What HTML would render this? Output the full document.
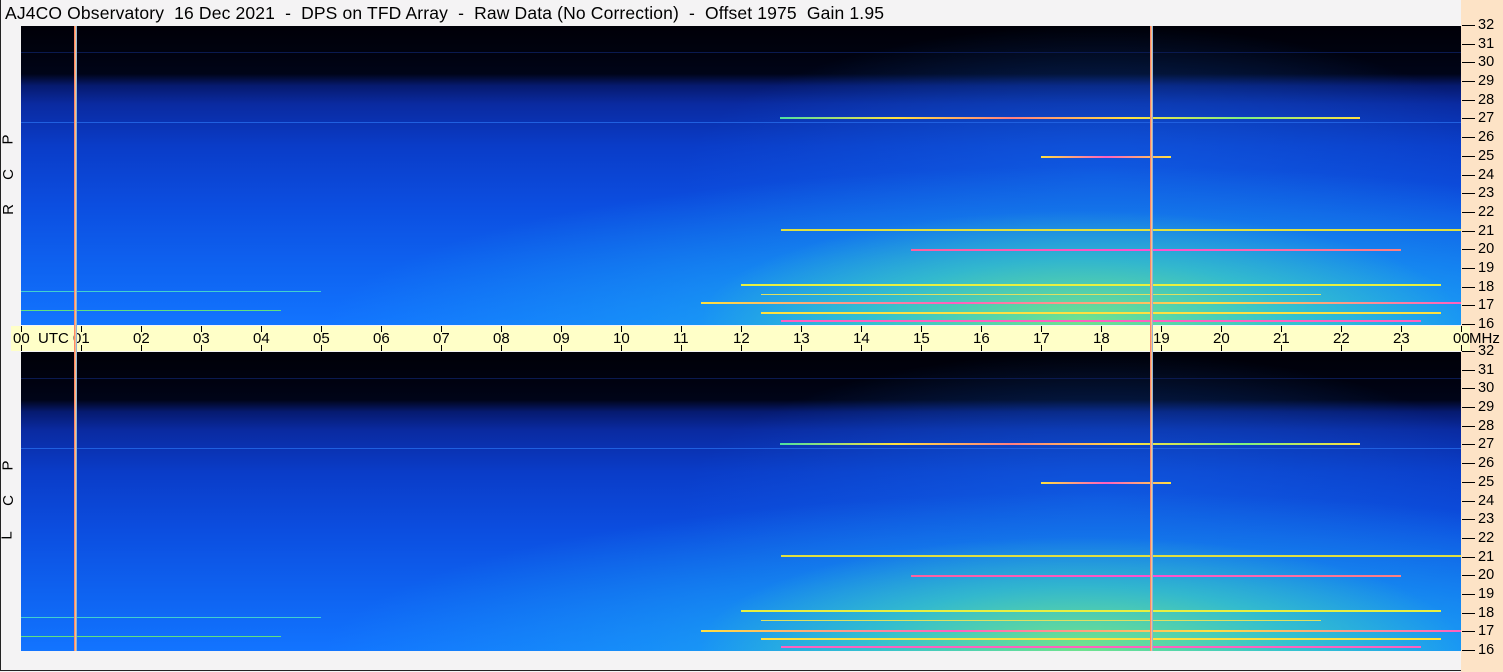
<!DOCTYPE html>
<html><head><style>
body{margin:0;width:1503px;height:672px;background:#f4f3f4;position:relative;overflow:hidden;font-family:"Liberation Sans",sans-serif;}
.frame{position:absolute;left:0;top:0;width:1501px;height:670px;border:1px solid #222;border-top:none;border-right:none;}
.title{position:absolute;left:5px;top:3px;font-size:17.5px;color:#000;white-space:pre;letter-spacing:0.15px;}
.spec{position:absolute;left:21px;width:1440px;height:299px;overflow:hidden;
background:
radial-gradient(ellipse 380px 110px at 1060px 295px, rgba(140,240,110,.75), rgba(80,225,170,.45) 55%, rgba(40,200,230,0) 100%),
radial-gradient(ellipse 780px 170px at 1080px 310px, rgba(40,210,220,.8), rgba(30,180,240,.4) 60%, rgba(20,150,250,0) 100%),
radial-gradient(ellipse 420px 150px at 1080px 150px, rgba(20,110,240,.5), rgba(20,110,240,0) 100%),
linear-gradient(to bottom,#000008 0%,#00020f 9%,#000418 16%,#061a70 20%,#0a2aa0 26%,#0a3cc8 40%,#0c4ee0 60%,#0e62f0 80%,#1274ff 100%);}
.l{position:absolute;height:2px;}
.vl{position:absolute;top:26px;height:625px;width:3px;background:linear-gradient(to right,#ff6060,#ffd080,#60a0ff);}
.ax{position:absolute;left:11px;top:326px;width:1459px;height:25px;background:#ffffc8;}
.tk{position:absolute;top:0;width:1px;height:25px;}
.tk:before,.tk:after{content:"";position:absolute;left:0;width:1px;height:6px;background:#000;}
.tk:before{top:0}.tk:after{bottom:0}
.hl{position:absolute;top:4px;font-size:15px;}
.rp{position:absolute;left:1461px;top:0;width:42px;height:672px;background:#fde3c6;}
.f{position:absolute;left:1462px;font-size:14.5px;width:41px;white-space:nowrap;}
.f:before{content:"";display:inline-block;width:13px;height:1px;background:#000;vertical-align:middle;margin-right:3px;}
.side{position:absolute;left:3px;font-size:15px;transform:rotate(-90deg);}
</style></head><body>
<div class="frame"></div>
<div class="rp"></div>
<div class="title">AJ4CO Observatory  16 Dec 2021  -  DPS on TFD Array  -  Raw Data (No Correction)  -  Offset 1975  Gain 1.95</div>

<div class="spec" style="top:26px">
<div class="l" style="top:26px;left:0;width:1440px;height:1px;background:#0a1a50"></div>
<div class="l" style="top:96px;left:0;width:1440px;height:1px;background:#2060e0"></div>
<div class="l" style="top:91px;left:759px;width:580px;background:linear-gradient(90deg,#50e0a0,#ffe040,#ff8080,#ffe040,#80f080,#ffe040)"></div>
<div class="l" style="top:130px;left:1020px;width:130px;background:linear-gradient(90deg,#ffe040,#ff60c0,#ffe040)"></div>
<div class="l" style="top:203px;left:760px;width:680px;background:#e0e040"></div>
<div class="l" style="top:223px;left:890px;width:490px;background:linear-gradient(90deg,#ff60a0,#ff50d0,#ff8080)"></div>
<div class="l" style="top:258px;left:720px;width:700px;background:#e8f040"></div>
<div class="l" style="top:268px;left:740px;width:560px;height:1px;background:#e0e060"></div>
<div class="l" style="top:276px;left:680px;width:760px;background:linear-gradient(90deg,#ffe040,#ff60c0,#ffe040,#ff60c0)"></div>
<div class="l" style="top:286px;left:740px;width:680px;background:#ffe040"></div>
<div class="l" style="top:294px;left:760px;width:640px;background:#ff60c0"></div>
<div class="l" style="top:265px;left:0;width:300px;height:1px;background:#40d0d0"></div>
<div class="l" style="top:284px;left:0;width:260px;height:1px;background:#60e080"></div>
</div>

<div class="spec" style="top:352px">
<div class="l" style="top:26px;left:0;width:1440px;height:1px;background:#0a1a50"></div>
<div class="l" style="top:96px;left:0;width:1440px;height:1px;background:#2060e0"></div>
<div class="l" style="top:91px;left:759px;width:580px;background:linear-gradient(90deg,#50e0a0,#ffe040,#ff8080,#ffe040,#80f080,#ffe040)"></div>
<div class="l" style="top:130px;left:1020px;width:130px;background:linear-gradient(90deg,#ffe040,#ff60c0,#ffe040)"></div>
<div class="l" style="top:203px;left:760px;width:680px;background:#e0e040"></div>
<div class="l" style="top:223px;left:890px;width:490px;background:linear-gradient(90deg,#ff60a0,#ff50d0,#ff8080)"></div>
<div class="l" style="top:258px;left:720px;width:700px;background:#e8f040"></div>
<div class="l" style="top:268px;left:740px;width:560px;height:1px;background:#e0e060"></div>
<div class="l" style="top:278px;left:680px;width:760px;background:linear-gradient(90deg,#ffe040,#ff60c0,#ffe040,#ff60c0)"></div>
<div class="l" style="top:286px;left:740px;width:680px;background:#ffe040"></div>
<div class="l" style="top:294px;left:760px;width:640px;background:#ff60c0"></div>
<div class="l" style="top:265px;left:0;width:300px;height:1px;background:#40d0d0"></div>
<div class="l" style="top:284px;left:0;width:260px;height:1px;background:#60e080"></div>
</div>

<div class="ax">
<div class="tk" style="left:10px"></div><div class="hl" style="left:2px">00&nbsp; UTC</div>
<div class="tk" style="left:70px"></div><div class="hl" style="left:62px">01</div>
<div class="tk" style="left:130px"></div><div class="hl" style="left:122px">02</div>
<div class="tk" style="left:190px"></div><div class="hl" style="left:182px">03</div>
<div class="tk" style="left:250px"></div><div class="hl" style="left:242px">04</div>
<div class="tk" style="left:310px"></div><div class="hl" style="left:302px">05</div>
<div class="tk" style="left:370px"></div><div class="hl" style="left:362px">06</div>
<div class="tk" style="left:430px"></div><div class="hl" style="left:422px">07</div>
<div class="tk" style="left:490px"></div><div class="hl" style="left:482px">08</div>
<div class="tk" style="left:550px"></div><div class="hl" style="left:542px">09</div>
<div class="tk" style="left:610px"></div><div class="hl" style="left:602px">10</div>
<div class="tk" style="left:670px"></div><div class="hl" style="left:662px">11</div>
<div class="tk" style="left:730px"></div><div class="hl" style="left:722px">12</div>
<div class="tk" style="left:790px"></div><div class="hl" style="left:782px">13</div>
<div class="tk" style="left:850px"></div><div class="hl" style="left:842px">14</div>
<div class="tk" style="left:910px"></div><div class="hl" style="left:902px">15</div>
<div class="tk" style="left:970px"></div><div class="hl" style="left:962px">16</div>
<div class="tk" style="left:1030px"></div><div class="hl" style="left:1022px">17</div>
<div class="tk" style="left:1090px"></div><div class="hl" style="left:1082px">18</div>
<div class="tk" style="left:1150px"></div><div class="hl" style="left:1142px">19</div>
<div class="tk" style="left:1210px"></div><div class="hl" style="left:1202px">20</div>
<div class="tk" style="left:1270px"></div><div class="hl" style="left:1262px">21</div>
<div class="tk" style="left:1330px"></div><div class="hl" style="left:1322px">22</div>
<div class="tk" style="left:1390px"></div><div class="hl" style="left:1382px">23</div>
<div class="tk" style="left:1450px"></div><div class="hl" style="left:1442px">00</div>
</div>
<div style="position:absolute;left:1469px;top:330px;font-size:15px">MHz</div>

<div class="vl" style="left:74px"></div>
<div class="vl" style="left:1150px"></div>

<div class="side" style="top:131px">P</div>
<div class="side" style="top:166px">C</div>
<div class="side" style="top:201px">R</div>
<div class="side" style="top:457px">P</div>
<div class="side" style="top:492px">C</div>
<div class="side" style="top:527px">L</div>

<div class="f" style="top:17px">32</div><div class="f" style="top:36px">31</div><div class="f" style="top:54px">30</div><div class="f" style="top:73px">29</div>
<div class="f" style="top:92px">28</div><div class="f" style="top:110px">27</div><div class="f" style="top:129px">26</div><div class="f" style="top:148px">25</div>
<div class="f" style="top:167px">24</div><div class="f" style="top:185px">23</div><div class="f" style="top:204px">22</div><div class="f" style="top:223px">21</div>
<div class="f" style="top:241px">20</div><div class="f" style="top:260px">19</div><div class="f" style="top:279px">18</div><div class="f" style="top:297px">17</div>
<div class="f" style="top:316px">16</div>
<div class="f" style="top:343px">32</div><div class="f" style="top:362px">31</div><div class="f" style="top:380px">30</div><div class="f" style="top:399px">29</div>
<div class="f" style="top:418px">28</div><div class="f" style="top:436px">27</div><div class="f" style="top:455px">26</div><div class="f" style="top:474px">25</div>
<div class="f" style="top:493px">24</div><div class="f" style="top:511px">23</div><div class="f" style="top:530px">22</div><div class="f" style="top:549px">21</div>
<div class="f" style="top:567px">20</div><div class="f" style="top:586px">19</div><div class="f" style="top:605px">18</div><div class="f" style="top:623px">17</div>
<div class="f" style="top:642px">16</div>
</body></html>
